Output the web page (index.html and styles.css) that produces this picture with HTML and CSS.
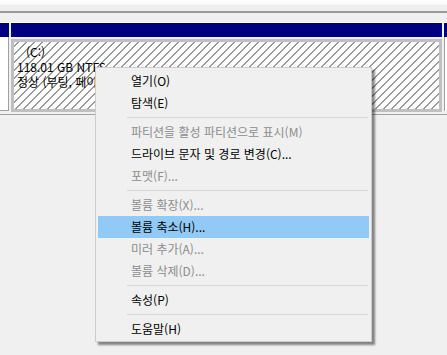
FILE: index.html
```html
<!DOCTYPE html>
<html lang="ko">
<head>
  <meta charset="UTF-8">
  <title>디스크 관리</title>
  <link rel="stylesheet" href="styles.css">
</head>
<body>
  <div class="toolbar"></div>
  <div class="band"></div>

  <div class="disk-row">
    <div class="col col-left">
      <div class="col-head"></div>
      <div class="col-body left-body"></div>
    </div>
    <div class="col col-main">
      <div class="col-head"></div>
      <div class="col-body">
        <div class="partition">
          <div class="part-name">(C:)</div>
          <div>118.01 GB NTFS</div>
          <div>정상 (부팅, 페이지 파일, 크래시 덤프, 주 파티션)</div>
        </div>
      </div>
    </div>
    <div class="col col-right">
      <div class="col-head"></div>
      <div class="col-body right-body"></div>
    </div>
  </div>

  <div class="menu">
    <div class="item">열기(O)</div>
    <div class="item">탐색(E)</div>
    <div class="sep"></div>
    <div class="item disabled">파티션을 활성 파티션으로 표시(M)</div>
    <div class="item">드라이브 문자 및 경로 변경(C)...</div>
    <div class="item disabled">포맷(F)...</div>
    <div class="sep"></div>
    <div class="item disabled">볼륨 확장(X)...</div>
    <div class="item active">볼륨 축소(H)...</div>
    <div class="item disabled">미러 추가(A)...</div>
    <div class="item disabled">볼륨 삭제(D)...</div>
    <div class="sep"></div>
    <div class="item">속성(P)</div>
    <div class="sep"></div>
    <div class="item">도움말(H)</div>
  </div>
</body>
</html>
```

FILE: styles.css
```css
:root {
  --navy: #000080;
  --frame: #c0c0c0;
  --bg: #f0f0f0;
}

* {
  margin: 0;
  padding: 0;
  box-sizing: border-box;
}

body {
  font-family: "Noto Sans CJK KR", "Noto Sans", sans-serif;
  font-size: 12px;
  color: #000;
  background: var(--bg);
  width: 447px;
  height: 355px;
  overflow: hidden;
  position: relative;
}

.toolbar {
  height: 13px;
  background: linear-gradient(to bottom, #fdfdfd 0, #fbfbfb 4px, #efefef 5px, #efefef 11px);
  border-bottom: 2px solid #9a9a9a;
  height: 13px;
}

.band {
  height: 10px;
  background: #f0f0f0;
  border-bottom: 1px solid #fff;
}

.disk-row {
  display: flex;
  gap: 2px;
  height: 92px;
  border-bottom: 1px solid #a0a0a0;
  background: #f0f0f0;
}

.col {
  display: flex;
  flex-direction: column;
}

.col-left {
  width: 9px;
}

.col-main {
  width: 431px;
}

.col-right {
  flex: 1;
}

.col-head {
  height: 14px;
  background: var(--navy);
}

.col-body {
  height: 74px;
  padding-top: 1px;
}

.left-body {
  background: #fff;
  border-right: 1px solid #a0a0a0;
  border-bottom: 1px solid #a0a0a0;
}

.right-body {
  border-left: 1px solid #a0a0a0;
  background: #fff;
}

.partition {
  height: 73px;
  margin-top: 1px;
  border: 3px solid var(--frame);
  border-top-width: 3px;
  padding: 0 0 0 3px;
  background-color: #fff;
  background-image: repeating-linear-gradient(-45deg, #fff 0, #fff 4.6px, #9a9a9a 4.6px, #9a9a9a 5.66px);
  line-height: 15px;
  white-space: nowrap;
  overflow: hidden;
}

.part-name {
  padding-left: 9px;
  padding-top: 2px;
}

.menu {
  position: absolute;
  left: 95px;
  top: 67px;
  width: 277px;
  padding: 2px 2px 1px 2px;
  background: #f0f0f0;
  border: 1px solid #cccccc;
  box-shadow: 3px 3px 2px rgba(0, 0, 0, 0.45);
}

.item {
  height: 22px;
  line-height: 22px;
  padding-left: 33px;
  white-space: nowrap;
}

.item.disabled {
  color: #8d8d8d;
}

.item.active {
  background: #91c9f7;
}

.sep {
  height: 7px;
  margin-left: 29px;
  margin-right: 1px;
  padding-top: 3px;
}

.sep::after {
  content: "";
  display: block;
  height: 1px;
  background: #d7d7d7;
}
```
